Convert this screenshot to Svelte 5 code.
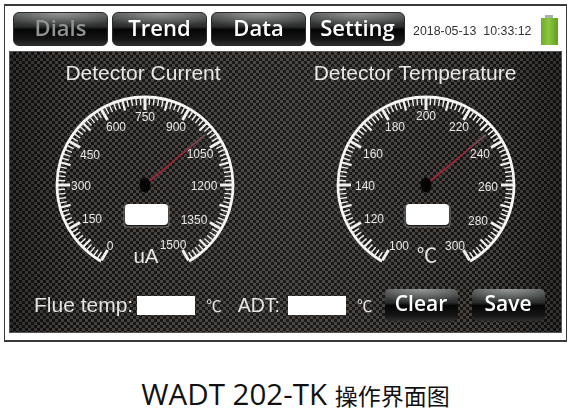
<script>
	const tabs = [
		{ label: 'Dials', dim: true },
		{ label: 'Trend' },
		{ label: 'Data' },
		{ label: 'Setting' }
	];

	const gauges = [
		{
			title: 'Detector Current',
			unit: 'uA',
			labels: [
				['0', 65, 160], ['150', 47, 133], ['300', 36, 100], ['450', 45, 69],
				['600', 71, 41], ['750', 100, 31], ['900', 131, 41], ['1050', 155, 68],
				['1200', 159, 100], ['1350', 149, 134], ['1500', 128, 159]
			]
		},
		{
			title: 'Detector Temperature',
			unit: '℃',
			labels: [
				['100', 73, 160], ['120', 48, 133], ['140', 39, 100], ['160', 47, 68],
				['180', 69, 41], ['200', 100, 30], ['220', 133, 41], ['240', 154, 68],
				['260', 162, 101], ['280', 152, 135], ['300', 129, 160]
			]
		}
	];

	const cx = 100;
	const cy = 100;

	function polar(r, deg) {
		const a = (deg * Math.PI) / 180;
		return { x: cx + r * Math.sin(a), y: cy - r * Math.cos(a) };
	}

	// 300 degree sweep, 10 sub ticks between labels
	const ticks = [];
	for (let i = 0; i <= 100; i++) {
		const deg = -150 + i * 3;
		const major = i % 10 === 0;
		const mid = i % 5 === 0;
		const from = polar(87, deg);
		const to = polar(major ? 75 : mid ? 77 : 80, deg);
		ticks.push({ from, to, w: major ? 3 : mid ? 2.2 : 1.4 });
	}

	const arcStart = polar(88, -150);
	const arcEnd = polar(88, 150);
	const arc = `M${arcStart.x} ${arcStart.y}A88 88 0 1 1 ${arcEnd.x} ${arcEnd.y}`;
	const tip = polar(78, 50);
</script>

<div class="screen">
	<div class="topbar">
		<nav class="tabs">
			{#each tabs as tab}
				<div class="gloss tab" class:dim={tab.dim}><span>{tab.label}</span></div>
			{/each}
		</nav>
		<div class="clock">2018-05-13&nbsp;&nbsp;10:33:12</div>
		<div class="battery"><span></span></div>
	</div>

	<div class="panel">
		<div class="dials">
			{#each gauges as g}
				<section class="dial">
					<h2>{g.title}</h2>
					<svg viewBox="0 0 200 200" width="200" height="200">
						<defs>
							<linearGradient id="needle" gradientUnits="userSpaceOnUse" x1={cx} y1={cy} x2={tip.x} y2={tip.y}>
								<stop offset="0" stop-color="#c81c30" />
								<stop offset="0.6" stop-color="#a82032" />
								<stop offset="1" stop-color="#6a5a5c" />
							</linearGradient>
						</defs>
						<path d={arc} fill="none" stroke="#f6f6f6" stroke-width="2.8" />
						{#each ticks as t}
							<line x1={t.from.x} y1={t.from.y} x2={t.to.x} y2={t.to.y} stroke="#f0f0f0" stroke-width={t.w} />
						{/each}
						{#each g.labels as [text, x, y]}
							<text class="num" {x} y={y + 4.5} text-anchor="middle">{text}</text>
						{/each}
						<line x1={cx} y1={cy} x2={tip.x} y2={tip.y} stroke="url(#needle)" stroke-width="1.5" />
						<ellipse cx={cx} cy={cy} rx="5.5" ry="7.5" fill="#050505" />
						<rect x="79" y="120" width="45" height="22" rx="3" fill="#1c1c1c" stroke="#8a8a8a" stroke-width="0.8" />
						<rect x="80" y="119" width="43" height="21" rx="4" fill="#fff" />
						<text class="unit" x={cx + 1} y="178" text-anchor="middle">{g.unit}</text>
					</svg>
				</section>
			{/each}
		</div>

		<div class="readouts">
			<span class="lbl">Flue temp:</span>
			<span class="field"></span>
			<span class="deg">℃</span>
			<span class="lbl adt">ADT:</span>
			<span class="field wide-gap"></span>
			<span class="deg">℃</span>
			<div class="gloss act clear"><span>Clear</span></div>
			<div class="gloss act"><span>Save</span></div>
		</div>
	</div>
</div>

<p class="caption">WADT 202-TK <span>操作界面图</span></p>

<style>
	:global(body) {
		background: #fff;
		overflow: hidden;
	}

	.screen {
		box-sizing: border-box;
		width: 563px;
		height: 338px;
		margin: 4px 0 0 4px;
		padding: 6px 4px 7px 4px;
		border: 1px solid #3a3a3a;
		border-width: 2px 1px 2px 1px;
		background: #fff;
		display: flex;
		flex-direction: column;
		gap: 5px;
		filter: blur(0.35px);
	}

	.topbar {
		display: flex;
		align-items: center;
		height: 34px;
		padding-left: 4px;
	}

	.tabs {
		display: flex;
		gap: 4px;
	}

	.gloss {
		display: flex;
		align-items: center;
		justify-content: center;
		font-family: 'Open Sans', 'DejaVu Sans', sans-serif;
		font-weight: 600;
		color: #fff;
		border-radius: 6px;
		background:
			radial-gradient(ellipse 70% 45% at 50% 0%, rgba(255, 255, 255, 0.42), rgba(255, 255, 255, 0) 100%),
			linear-gradient(180deg, #4c4f4f 0%, #2c2e2e 42%, #050505 52%, #151515 82%, #2e2e2e 100%);
	}

	.gloss span {
		margin-top: -4px;
	}

	.tab {
		width: 95px;
		height: 34px;
		font-size: 22px;
		border: 1px solid #2a2a2a;
		box-sizing: border-box;
	}

	.tab.dim {
		color: #8f9393;
	}

	.clock {
		margin-left: 8px;
		width: 124px;
		font-family: 'Liberation Sans', sans-serif;
		font-size: 12.4px;
		color: #333;
		white-space: nowrap;
		padding-top: 3px;
	}

	.battery {
		position: relative;
		width: 17px;
		height: 27px;
		margin-left: 4px;
		margin-top: 5px;
		background: linear-gradient(90deg, #6dab2a, #8cc63f 45%, #5f9e22);
	}

	.battery span {
		position: absolute;
		left: 4px;
		top: -3px;
		width: 8px;
		height: 3px;
		background: #a9b3a4;
	}

	.panel {
		flex: 1;
		background-color: #2a2827;
		background-image:
			linear-gradient(90deg, rgba(0, 0, 0, 0.28), rgba(0, 0, 0, 0) 12%, rgba(255, 255, 255, 0.03) 50%, rgba(0, 0, 0, 0) 88%, rgba(0, 0, 0, 0.28)),
			conic-gradient(#151413 25%, #454240 0 50%, #151413 0 75%, #454240 0);
		background-size: auto, 6px 6px;
		border: 1px solid #555;
		display: flex;
		flex-direction: column;
	}

	.dials {
		display: flex;
		padding: 10px 0 0 35px;
		gap: 81px;
	}

	.dial {
		width: 200px;
		display: flex;
		flex-direction: column;
		align-items: center;
	}

	h2 {
		margin: 0 4px 0 0;
		height: 24px;
		font-family: 'Liberation Sans', sans-serif;
		font-weight: 400;
		font-size: 21px;
		line-height: 22px;
		color: #e8e8e8;
		white-space: nowrap;
	}

	.dial + .dial h2 {
		margin-right: 22px;
	}

	svg {
		display: block;
		margin-top: -1px;
	}

	.num {
		font-family: 'Liberation Sans', sans-serif;
		font-size: 12px;
		fill: #e6e6e6;
	}

	.unit {
		font-family: 'Liberation Sans', 'Noto Sans CJK SC', sans-serif;
		font-size: 20.5px;
		fill: #e6e6e6;
	}

	.readouts {
		display: flex;
		align-items: center;
		margin-top: auto;
		margin-bottom: 11px;
		padding-left: 24px;
		font-family: 'Liberation Sans', 'Noto Sans CJK SC', sans-serif;
		font-size: 21px;
		color: #e4e4e4;
	}

	.field {
		width: 58px;
		height: 19px;
		margin-left: 4px;
		background: #fff;
	}

	.field.wide-gap {
		margin-left: 8px;
	}

	.deg {
		margin-left: 11px;
		font-size: 15.5px;
	}

	.adt {
		margin-left: 16px;
		font-size: 19.5px;
	}

	.act {
		width: 73px;
		height: 32px;
		font-size: 21px;
		margin-left: 14px;
		border-radius: 5px;
	}

	.act.clear {
		margin-left: 12px;
	}

	.caption {
		margin: 37px 0 0;
		padding-left: 20px;
		text-align: center;
		font-family: 'Open Sans', 'Noto Sans CJK SC', sans-serif;
		font-size: 29.5px;
		line-height: 30px;
		color: #111;
		white-space: nowrap;
	}

	.caption span {
		font-family: 'Noto Sans CJK SC', sans-serif;
		font-size: 23px;
		line-height: 1;
	}
</style>
